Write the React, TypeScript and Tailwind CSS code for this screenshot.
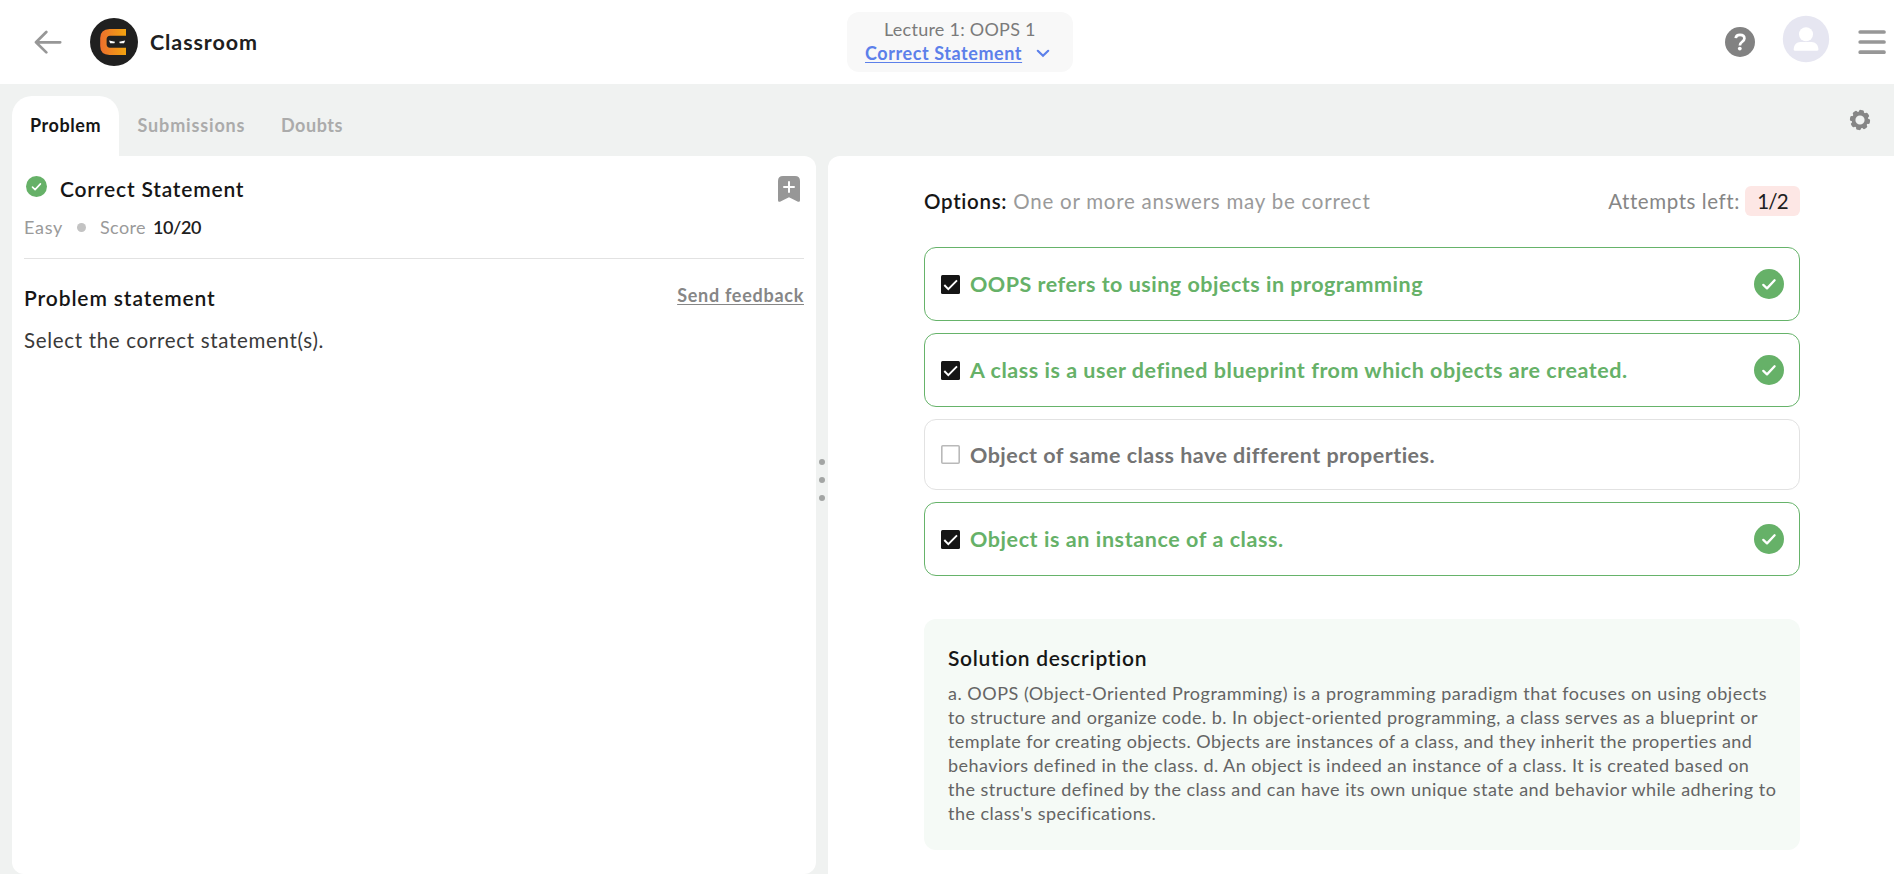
import type { ReactNode } from "react";

const GREEN_CARD = "h-[74px] border-[#66b36a]";
const GREY_CARD = "h-[71px] border-[#e2e2e2]";

const options = [
  { text: "OOPS refers to using objects in programming", correct: true, tracking: "tracking-[0.5px]" },
  { text: "A class is a user defined blueprint from which objects are created.", correct: true, tracking: "tracking-[0.53px]" },
  { text: "Object of same class have different properties.", correct: false, tracking: "tracking-[0.47px]" },
  { text: "Object is an instance of a class.", correct: true, tracking: "tracking-[0.58px]" },
];

const solution = [
  { text: "a. OOPS (Object-Oriented Programming) is a programming paradigm that focuses on using objects", tracking: "tracking-[0.511px]" },
  { text: "to structure and organize code. b. In object-oriented programming, a class serves as a blueprint or", tracking: "tracking-[0.445px]" },
  { text: "template for creating objects. Objects are instances of a class, and they inherit the properties and", tracking: "tracking-[0.425px]" },
  { text: "behaviors defined in the class. d. An object is indeed an instance of a class. It is created based on", tracking: "tracking-[0.442px]" },
  { text: "the structure defined by the class and can have its own unique state and behavior while adhering to", tracking: "tracking-[0.464px]" },
  { text: "the class's specifications.", tracking: "tracking-[0.48px]" },
];

function BackArrow() {
  return (
    <svg width="28" height="24" viewBox="0 0 28 24" fill="none" stroke="#979797" strokeWidth="2.7" strokeLinecap="round" strokeLinejoin="round">
      <path d="M12.3 2 2 12.3 12.3 22.4M2 12.3H26.2" />
    </svg>
  );
}

function Logo() {
  return (
    <svg width="48" height="48" viewBox="0 0 48 48">
      <defs>
        <linearGradient id="logo" x1="0" x2="1" y1="0" y2="0">
          <stop offset="0" stopColor="#ec6f2d" />
          <stop offset="1" stopColor="#f2a30f" />
        </linearGradient>
      </defs>
      <circle cx="24" cy="24" r="24" fill="#202020" />
      <path d="M36 11H19.5Q10.300 11.300 10.200 20V28Q10.300 36.800 19.500 37H36V29.700H20Q16.700 29.500 16.600 26.500V21Q16.700 17.900 20 17.700H36Z" fill="url(#logo)" />
      <path d="m19 22.600 6 1.200-.6 1.400h-4.200zM35.200 22.600l-6 1.200.6 1.400h4.200z" fill="#fff" />
    </svg>
  );
}

function Help() {
  return (
    <svg width="30" height="30" viewBox="0 0 30 30" fill="none">
      <circle cx="15" cy="15" r="15" fill="#828282" />
      <path d="M10.700 11.200C11 8.900 12.600 7.900 15 7.900c2.600 0 4.400 1.400 4.400 3.600 0 3.300-4.500 3.300-4.500 6.900" stroke="#fff" strokeWidth="2.700" />
      <circle cx="14.800" cy="21.600" r="1.900" fill="#fff" />
    </svg>
  );
}

function Avatar() {
  return (
    <svg width="48" height="48" viewBox="0 0 48 48">
      <circle cx="24" cy="24" r="23.200" fill="#e6e6f1" />
      <circle cx="24" cy="19.200" r="7" fill="#fff" />
      <path d="M11.700 34.600c0-4.500 2.800-7.500 6.800-7.500h11c4 0 6.900 3 6.900 7.500 0 .8-.5 1.200-1.200 1.200H12.900c-.7 0-1.200-.4-1.200-1.200Z" fill="#fff" />
    </svg>
  );
}

function Gear() {
  return (
    <svg width="22" height="22" viewBox="0 0 22 22" fill="none">
      <circle cx="11" cy="11" r="6.500" stroke="#868686" strokeWidth="3.800" />
      <g fill="#868686">
        {[10, 55, 100, 145, 190, 235, 280, 325].map((angle) => (
          <rect key={angle} x="8.500" y="0.900" width="5" height="4" rx="1.600" transform={`rotate(${angle} 11 11)`} />
        ))}
      </g>
    </svg>
  );
}

function Bookmark() {
  return (
    <svg width="22" height="26" viewBox="0 0 22 26">
      <path d="M5 0h12q5 0 5 5v19.300q0 2-2 1.400L11 21.200 2 25.700q-2 .6-2-1.400V5q0-5 5-5Z" fill="#979797" />
      <path d="M11 6v10M6 11h10" stroke="#fff" strokeWidth="2" strokeLinecap="round" />
    </svg>
  );
}

function RoundCheck({ size }: { size: number }) {
  return (
    <svg width={size} height={size} viewBox="0 0 30 30" fill="none" className="shrink-0">
      <circle cx="15" cy="15" r="15" fill="#66b168" />
      <path d="m9.300 15.900 3.700 3.500 7.600-8.100" stroke="#fff" strokeWidth="2.300" strokeLinecap="round" strokeLinejoin="round" />
    </svg>
  );
}

function CheckBox({ checked }: { checked: boolean }) {
  return (
    <svg width="19" height="19" viewBox="0 0 19 19" fill="none" className="shrink-0">
      {checked ? (
        <>
          <rect width="19" height="19" rx="1.500" fill="#151515" />
          <path d="m3.300 10 4 4.200L16 5.300" stroke="#fff" strokeWidth="1.900" />
        </>
      ) : (
        <rect x="0.800" y="0.800" width="17.400" height="17.400" rx="1" stroke="#b9b9b9" strokeWidth="1.600" />
      )}
    </svg>
  );
}

function Tab({ children }: { children: ReactNode }) {
  return <div className="flex h-[58px] items-center text-[18px] font-bold text-[#ababab]">{children}</div>;
}

export default function App() {
  return (
    <div className="flex h-[874px] w-full flex-col overflow-hidden whitespace-nowrap bg-[#f0f2f1] font-['Lato','Open_Sans',sans-serif] text-[#161616]">
      <header className="grid h-[84px] shrink-0 grid-cols-[847px_226px_1fr] bg-white">
        <div className="flex h-full items-center pl-[34px]">
          <BackArrow />
          <div className="ml-7">
            <Logo />
          </div>
          <span className="ml-3 text-[21.500px] font-bold tracking-[0.9px] text-[#202020]">Classroom</span>
        </div>
        <div className="mt-3 flex h-[60px] flex-col rounded-xl bg-[#f8f8f8] pt-[5px]">
          <span className="pl-[37px] text-[18px] leading-6 tracking-[0.25px] text-[#7b7b7b]">Lecture 1: OOPS 1</span>
          <div className="flex items-center pl-[18px]">
            <span className="text-[18px] leading-6 font-bold tracking-[0.57px] text-[#5c80ea] underline decoration-1 underline-offset-2">Correct Statement</span>
            <svg width="14" height="9" viewBox="0 0 14 9" fill="none" className="ml-[14px]">
              <path d="m1.800 1.800 5.200 5 5.200-5" stroke="#5c80ea" strokeWidth="2.200" strokeLinecap="round" />
            </svg>
          </div>
        </div>
        <div className="flex h-full items-center justify-end pr-2">
          <Help />
          <div className="mr-[28px] ml-[27px] pb-[6px]">
            <Avatar />
          </div>
          <svg width="28" height="24" viewBox="0 0 28 24" stroke="#979797" strokeWidth="3.700" strokeLinecap="round">
            <path d="M2.200 2h23.800M2.200 12h23.800M2.200 22.200h23.800" />
          </svg>
        </div>
      </header>

      <nav className="flex h-[72px] shrink-0 items-end justify-between pl-3">
        <div className="flex h-[60px] items-start">
          <div className="flex h-[60px] w-[107px] items-start rounded-t-[20px] bg-white pl-[18px]">
            <div className="flex h-[58px] items-center text-[18px] font-bold tracking-[0.55px]">Problem</div>
          </div>
          <div className="ml-[18.500px] w-[143.500px] tracking-[0.85px]">
            <Tab>Submissions</Tab>
          </div>
          <div className="tracking-[0.55px]">
            <Tab>Doubts</Tab>
          </div>
        </div>
        <div className="mr-[23px] h-[47px]">
          <Gear />
        </div>
      </nav>

      <main className="flex h-[718px] shrink-0">
        <section className="ml-3 w-[804px] rounded-tr-xl rounded-b-xl bg-white px-3">
          <div className="flex h-[103px] flex-col border-b border-[#e2e2e2] pt-[18px]">
            <div className="flex h-7 items-start">
              <div className="ml-[1.500px] pt-[2px]">
                <RoundCheck size={21} />
              </div>
              <h1 className="mt-px ml-[13.500px] text-[21px] leading-7 font-semibold tracking-[0.8px]">Correct Statement</h1>
              <div className="mr-1 ml-auto pt-[2px]">
                <Bookmark />
              </div>
            </div>
            <div className="mt-[13px] flex h-6 items-center text-[18px] text-[#9a9a9a]">
              <span className="tracking-[0.7px]">Easy</span>
              <span className="ml-[14px] size-[9px] rounded-full bg-[#c3c3c3]" />
              <span className="ml-[14px] tracking-[0.4px]">Score</span>
              <span className="ml-[7px] font-semibold tracking-[-0.4px] text-[#202020]">10/20</span>
            </div>
          </div>
          <div className="flex justify-between pt-[25px]">
            <h2 className="text-[21px] leading-7 font-semibold tracking-[0.88px]">Problem statement</h2>
            <a className="text-[18px] leading-[22px] font-bold tracking-[0.72px] text-[#868686] underline decoration-1 underline-offset-2">Send feedback</a>
          </div>
          <p className="mt-[14px] text-[20.500px] leading-7 tracking-[0.68px] text-[#3a3a3a]">Select the correct statement(s).</p>
        </section>

        <div className="flex w-3 flex-col items-center pt-[303px]">
          <div className="flex flex-col gap-3">
            <span className="size-[6px] rounded-full bg-[#a3a5a4]" />
            <span className="size-[6px] rounded-full bg-[#a3a5a4]" />
            <span className="size-[6px] rounded-full bg-[#a3a5a4]" />
          </div>
        </div>

        <section className="flex-1 rounded-tl-xl bg-white pt-[30px] pl-24">
          <div className="w-[876px]">
            <div className="flex h-[30px] items-center text-[20.500px]">
              <span className="pt-px font-semibold tracking-[0.7px]">Options:</span>
              <span className="pt-px pl-[6px] tracking-[0.76px] text-[#9a9a9a]">One or more answers may be correct</span>
              <span className="ml-auto tracking-[0.58px] text-[#868686]">Attempts left:</span>
              <span className="ml-[5px] flex h-[30px] w-[55px] items-center justify-center rounded-md bg-[#fde7e5] tracking-[-0.9px] text-[#202020]">1/2</span>
            </div>

            <div className="mt-[31px] flex flex-col gap-3">
              {options.map((o) => (
                <div key={o.text} className={`flex items-center rounded-xl border pr-[15px] pl-4 ${o.correct ? GREEN_CARD : GREY_CARD}`}>
                  <CheckBox checked={o.correct} />
                  <span className={`ml-[10px] flex-1 text-[21.500px] leading-7 font-bold ${o.tracking} ${o.correct ? "text-[#66b168]" : "text-[#747474]"}`}>{o.text}</span>
                  {o.correct && <RoundCheck size={30} />}
                </div>
              ))}
            </div>

            <div className="mt-[43px] h-[231px] rounded-xl bg-[#f5faf6] pt-[25px] pl-6">
              <h2 className="text-[21px] leading-7 font-semibold tracking-[0.67px]">Solution description</h2>
              <p className="mt-[9px] flex flex-col text-[18px] leading-6 text-[#646464]">
                {solution.map((l) => (
                  <span key={l.text} className={l.tracking}>{l.text}</span>
                ))}
              </p>
            </div>
          </div>
        </section>
      </main>
    </div>
  );
}
